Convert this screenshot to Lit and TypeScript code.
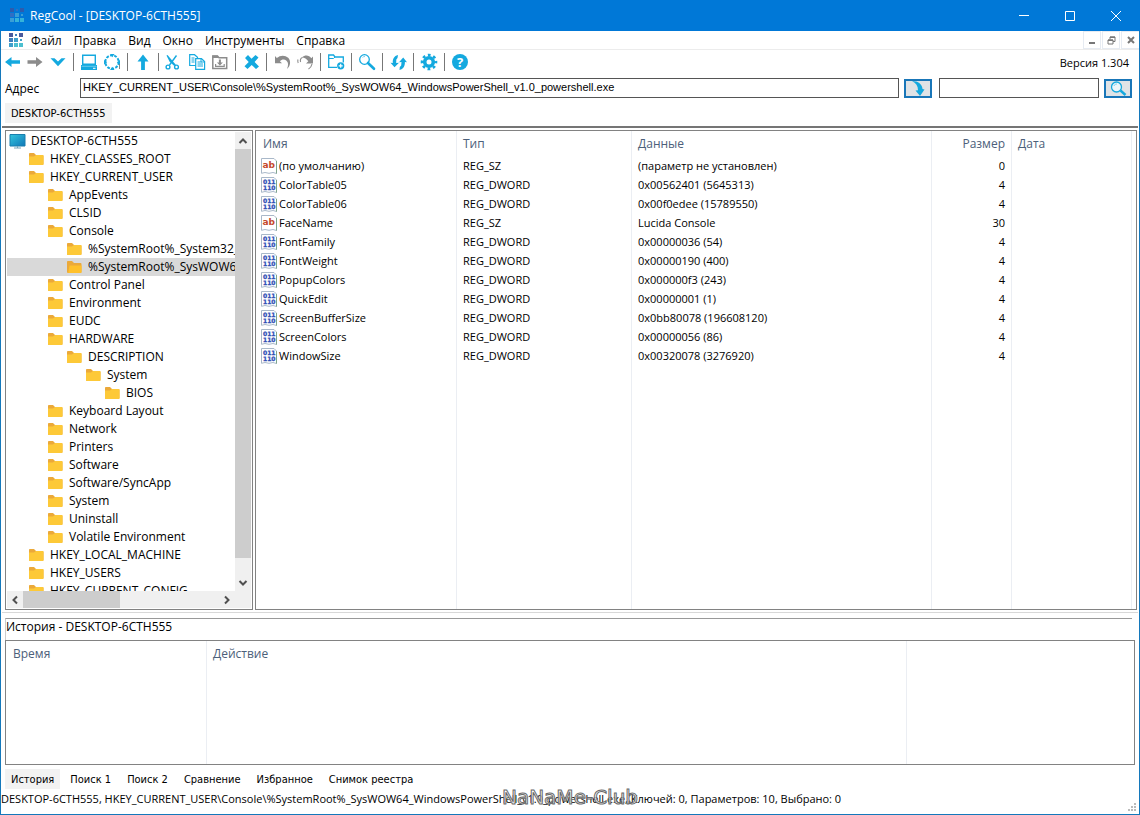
import { LitElement, html, css, svg } from "lit";
import { customElement, state } from "lit/decorators.js";
import { classMap } from "lit/directives/class-map.js";
import { styleMap } from "lit/directives/style-map.js";

interface TreeNode {
  name: string;
  level: number;
}

interface RegValue {
  name: string;
  type: string;
  data: string;
  size: number;
}

const ICONS: Record<string, unknown> = {
  back: svg`<path d="M4 12 10.500 7V10.200H19V13.800H10.500V17Z" fill="#14a9df"/>`,
  forward: svg`<path d="M18.500 12 12 7V10.200H3.500V13.800H12V17Z" fill="#8c8c8c"/>`,
  history: svg`<path d="M3.500 8.200H7.500L11 11.600 14.500 8.200H18.500L11 16.200Z" fill="#14a9df"/>`,
  computer: svg`<path d="M4.700 5.200H17.300V14.300H4.700Z" fill="#fff" stroke="#14a9df" stroke-width="1.400"/><path d="M3 15H19V20H3Z" fill="#14a9df"/><path d="M3.500 16.300H18.500" stroke="#a5e0f5" stroke-width=".6"/><path d="M15 18.300h2.500" stroke="#fff"/>`,
  focus: svg`<circle cx="11" cy="12" r="6.700" fill="none" stroke="#14a9df" stroke-width="2" stroke-dasharray="2.800 1.400"/><path d="M9 4H13.500L11.300 7.200ZM9 20H13.500L11.300 16.800ZM3 10V14.500L6.200 12.200ZM19 10V14.500L15.800 12.200Z" fill="#14a9df"/><path d="M18.500 14v5" stroke="#666" stroke-width=".8"/>`,
  up: svg`<path d="M11 4.500 16.500 11.500H12.900V20H9.100V11.500H5.500Z" fill="#14a9df"/>`,
  cut: svg`<g fill="none" stroke="#14a9df" stroke-width="1.400"><path d="M13.500 5.500 6.500 15"/><circle cx="5" cy="17" r="1.900"/><circle cx="13.500" cy="17" r="1.900"/></g><path d="M3.500 5.500 4.500 5 12.800 14.800 11.300 16 6.500 11.500Z" fill="#14a9df"/>`,
  copy: svg`<g fill="#fff" stroke="#14a9df" stroke-width="1.200"><path d="M3.700 4.700H8.500L11.500 7.200V15.500H3.700Z"/><path d="M9.700 8.700H15.500L18.600 11.500V19.300H9.700Z"/></g><path d="M5.500 8h3M5.500 10h3M5.500 12h3M11.500 12h4M11.500 14h5.500M11.500 16h5.500" stroke="#14a9df"/><path d="M15 8.700V12h3.500" fill="none" stroke="#14a9df"/>`,
  paste: svg`<path d="M3.800 6H8.500L10 7.700H17.700V18.500H3.800Z" fill="#fff" stroke="#8c8c8c" stroke-width="1.500"/><path d="M3.500 5.500H8.500L10 8H3.500Z" fill="#8c8c8c"/><path d="M9.900 9.500h2v3h2L10.900 15.400 7.900 12.500h2ZM6 14h1.200v1.800h7.400V14H15.800V17H6Z" fill="#8c8c8c"/>`,
  remove: svg`<path d="M5 8 8 5 11.500 8.700 15.500 5 18.500 7.500 14.600 11.900 19 16.500 16 19 11.700 15 7.500 19 4.500 16.300 8.700 11.900Z" fill="#14a9df"/>`,
  undo: svg`<path d="M4 6 5.800 8.100C9 5 14 4.800 17.200 7.800 20.200 11 19.500 16 16 19 17.600 15 17.400 12.500 15.500 10.800 13.500 9 10.800 9.200 8.900 11.200L11 13.200H4Z" fill="#8c8c8c"/>`,
  redo: svg`<path d="M8 7.500C11 4.600 15 5 17.300 8.200L19 6.500V13.500H12L14.300 11.200C12.800 8.800 10.500 7.800 8 7.500Z" fill="#8c8c8c"/><path d="M4 9.500C3.500 11 3.700 12 4.200 13M8.500 7.500C6.500 8 6 10 6.600 12M18 14C17.500 16.500 16.500 17.800 14.500 19" stroke="#8c8c8c" stroke-width="1.100" fill="none"/>`,
  newKey: svg`<path d="M12 17.300H3.700V5H8.500L10 7H18.300V12.500" fill="none" stroke="#14a9df" stroke-width="1.300"/><path d="M3.500 8.500H8.500L10 7" fill="none" stroke="#14a9df"/><circle cx="15.700" cy="15.800" r="3.600" fill="#14a9df"/><path d="M15.700 13.800v4M13.700 15.800h4" stroke="#fff" stroke-width="1.200"/>`,
  find: svg`<circle cx="8.500" cy="9.500" r="4.800" fill="#fff" stroke="#14a9df" stroke-width="1.300"/><path d="M6.500 7.500C7.200 6.700 8 6.500 9 6.500" fill="none" stroke="#7fd2f0"/><path d="M12 13 18 18.800" stroke="#14a9df" stroke-width="2.600" stroke-linecap="round"/>`,
  refresh: svg`<path d="M11 5 10.500 8 9.300 9.500 9.200 13 12 12.800 7.500 17.300 3.500 12.800 5.800 13C5.500 9 7 6 11 5ZM12.500 20 12.800 17 14.200 15.500 14.500 12 12 12.200 16.200 7.500 20 12.200 17.900 12C18 16 16.500 19 12.500 20Z" fill="#14a9df"/>`,
  settings: svg`<circle cx="11" cy="12" r="4.300" fill="none" stroke="#14a9df" stroke-width="3.600"/><circle cx="11" cy="12" r="7" fill="none" stroke="#14a9df" stroke-width="2.600" stroke-dasharray="2.750 2.748" stroke-dashoffset="1.370"/>`,
  help: svg`<circle cx="11" cy="12" r="8" fill="#14a9df"/><text x="11" y="16.500" text-anchor="middle" font-family="Open Sans" font-weight="700" font-size="13" fill="#fff">?</text>`,
};

const TOOL_GROUPS: [string, string][][] = [
  [["back", "Назад"], ["forward", "Вперёд"], ["history", "Журнал"]],
  [["computer", "Компьютер"], ["focus", "Выделить"]],
  [["up", "Вверх"]],
  [["cut", "Вырезать"], ["copy", "Копировать"], ["paste", "Вставить"]],
  [["remove", "Удалить"]],
  [["undo", "Отменить"], ["redo", "Повторить"]],
  [["newKey", "Создать раздел"]],
  [["find", "Найти"]],
  [["refresh", "Обновить"]],
  [["settings", "Настройки"]],
  [["help", "Справка"]],
];

const MENU = ["Файл", "Правка", "Вид", "Окно", "Инструменты", "Справка"];

const TREE: TreeNode[] = [
  { name: "DESKTOP-6CTH555", level: 0 },
  { name: "HKEY_CLASSES_ROOT", level: 1 },
  { name: "HKEY_CURRENT_USER", level: 1 },
  { name: "AppEvents", level: 2 },
  { name: "CLSID", level: 2 },
  { name: "Console", level: 2 },
  { name: "%SystemRoot%_System32_WindowsPowerShell_v1.0_powershell.exe", level: 3 },
  { name: "%SystemRoot%_SysWOW64_WindowsPowerShell_v1.0_powershell.exe", level: 3 },
  { name: "Control Panel", level: 2 },
  { name: "Environment", level: 2 },
  { name: "EUDC", level: 2 },
  { name: "HARDWARE", level: 2 },
  { name: "DESCRIPTION", level: 3 },
  { name: "System", level: 4 },
  { name: "BIOS", level: 5 },
  { name: "Keyboard Layout", level: 2 },
  { name: "Network", level: 2 },
  { name: "Printers", level: 2 },
  { name: "Software", level: 2 },
  { name: "Software/SyncApp", level: 2 },
  { name: "System", level: 2 },
  { name: "Uninstall", level: 2 },
  { name: "Volatile Environment", level: 2 },
  { name: "HKEY_LOCAL_MACHINE", level: 1 },
  { name: "HKEY_USERS", level: 1 },
  { name: "HKEY_CURRENT_CONFIG", level: 1 },
];

const VALUES: RegValue[] = [
  { name: "(по умолчанию)", type: "REG_SZ", data: "(параметр не установлен)", size: 0 },
  { name: "ColorTable05", type: "REG_DWORD", data: "0x00562401 (5645313)", size: 4 },
  { name: "ColorTable06", type: "REG_DWORD", data: "0x00f0edee (15789550)", size: 4 },
  { name: "FaceName", type: "REG_SZ", data: "Lucida Console", size: 30 },
  { name: "FontFamily", type: "REG_DWORD", data: "0x00000036 (54)", size: 4 },
  { name: "FontWeight", type: "REG_DWORD", data: "0x00000190 (400)", size: 4 },
  { name: "PopupColors", type: "REG_DWORD", data: "0x000000f3 (243)", size: 4 },
  { name: "QuickEdit", type: "REG_DWORD", data: "0x00000001 (1)", size: 4 },
  { name: "ScreenBufferSize", type: "REG_DWORD", data: "0x0bb80078 (196608120)", size: 4 },
  { name: "ScreenColors", type: "REG_DWORD", data: "0x00000056 (86)", size: 4 },
  { name: "WindowSize", type: "REG_DWORD", data: "0x00320078 (3276920)", size: 4 },
];

const BOTTOM_TABS = ["История", "Поиск 1", "Поиск 2", "Сравнение", "Избранное", "Снимок реестра"];

const KEY_PATH = "HKEY_CURRENT_USER\\Console\\%SystemRoot%_SysWOW64_WindowsPowerShell_v1.0_powershell.exe";

@customElement("app-root")
export class AppRoot extends LitElement {
  @state() private selected = 7;
  @state() private tab = 0;

  static styles = css`
    :host {
      display: block;
      font-family: "Open Sans", "Noto Sans", sans-serif;
      font-size: 12px;
      line-height: 18px;
      color: #000;
    }
    * { box-sizing: border-box; }
    button {
      font: inherit;
      color: inherit;
      background: none;
      border: 0;
      padding: 0;
      margin: 0;
    }
    svg { display: block; flex: none; }
    .window {
      display: flex;
      flex-direction: column;
      height: 100vh;
      min-height: 500px;
      background: #fff;
      border: 1px solid #1478bb;
      border-top: 0;
    }
    .titlebar {
      display: flex;
      align-items: center;
      height: 31px;
      margin: 0 -1px;
      padding-left: 9px;
      background: #0078d7;
      color: #fff;
      flex: none;
    }
    .titlebar h1 {
      flex: 1;
      margin: 0 0 0 6px;
      font-size: 12px;
      font-weight: 400;
    }
    .caption { width: 46px; height: 31px; display: grid; place-items: center; }
    .caption:last-child { width: 47px; padding-right: 2px; }
    .menubar {
      display: flex;
      align-items: center;
      height: 19px;
      padding-left: 7px;
      border-bottom: 1px solid #ececec;
      flex: none;
    }
    .menubar nav { display: flex; flex: 1; gap: 12px; padding: 2px 0 0 8px; }
    .mdi {
      width: 18px;
      height: 18px;
      display: grid;
      place-items: center;
      border: 1px solid #e6ebf2;
      margin-left: 1px;
    }
    .mdi:last-child { border-right: 0; }
    .toolbar { display: flex; align-items: center; height: 24px; flex: none; }
    .group { display: flex; }
    .group + .group::before {
      content: "";
      width: 1px;
      height: 18px;
      margin: 3px 4px 0 3px;
      background: #777;
    }
    .version { margin-left: auto; padding: 2px 10px 0 0; font-size: 11px; }
    .address {
      display: grid;
      grid-template-columns: 70px 1fr 28px 162px 28px;
      gap: 5px;
      align-items: center;
      height: 28px;
      padding: 0 7px 0 4px;
      flex: none;
    }
    .address label { padding-top: 2px; }
    .address input {
      height: 20px;
      border: 1px solid #555;
      padding: 0 1px 2px 2px;
      min-width: 0;
      width: 100%;
      font: 11px/16px "Liberation Sans", Arial, sans-serif;
      color: #000;
      background: #fff;
      border-radius: 0;
      outline: none;
    }
    .address .query { width: 160px; justify-self: end; }
    .go {
      height: 19px;
      border: 2px solid #1976b8;
      background: #dfe3e6;
      display: grid;
      place-items: center;
      overflow: hidden;
    }
    .small { font-family: "DejaVu Sans Condensed", "DejaVu Sans", sans-serif; font-size: 11px; line-height: 18px; }
    .doctabs { display: flex; padding: 1px 4px 3px; flex: none; }
    .tab { padding: 2px 6px 0; height: 20px; }
    .tab.on { background: #f2f2f2; }
    .panes {
      flex: 1;
      min-height: 0;
      display: grid;
      grid-template-columns: 248px 1fr;
      gap: 2px;
      margin: 0 1px;
      padding: 2px 1px 2px 3px;
      border-top: 2px solid #757575;
      border-bottom: 1px solid #d8d8d8;
    }
    .box { border: 1px solid #828282; min-width: 0; min-height: 0; overflow: hidden; }
    .treebox { display: grid; grid-template: 1fr 17px / 1fr 16px; padding: 1px; }
    .tree { list-style: none; margin: 0; padding: 0; overflow: hidden; min-height: 0; }
    .node {
      display: flex;
      align-items: center;
      gap: 5px;
      height: 18px;
      white-space: nowrap;
      cursor: default;
    }
    .node.on { background: #d9d9d9; }
    .vscroll, .hscroll { display: flex; background: #f0f0f0; }
    .vscroll { flex-direction: column; }
    .arrow { width: 16px; height: 17px; display: grid; place-items: center; flex: none; }
    .track { flex: 1; display: flex; }
    .vscroll .track { flex-direction: column; }
    .thumb { background: #cdcdcd; }
    .corner { background: #f0f0f0; }
    table { width: 100%; height: 100%; border-collapse: separate; border-spacing: 0; table-layout: fixed; }
    th, td {
      font-size: 11px;
      font-weight: 400;
      text-align: left;
      padding: 0 6px;
      border-right: 1px solid #ebeef3;
      white-space: nowrap;
      overflow: hidden;
      height: 19px;
      line-height: 18px;
    }
    th { height: 25px; font-size: 12px; color: #4c607a; }
    th:first-child { padding-left: 7px; }
    th:last-child, td:last-child { border-right: 0; }
    .num { text-align: right; }
    .cell { display: flex; align-items: center; gap: 2px; }
    td:first-child { padding-left: 5px; }
    tr.rest td { height: auto; }
    .history { padding: 5px 4px 4px; flex: none; }
    .history h2 {
      margin: 0 3px 0 0;
      height: 22px;
      border-top: 1px solid #999;
      border-left: 1px solid #ccc;
      font-size: 12px;
      font-weight: 400;
      line-height: 16px;
    }
    .history .box { height: 125px; }
    .bottomtabs { display: flex; gap: 4px; padding: 0 4px; flex: none; }
    .status {
      position: relative;
      display: flex;
      justify-content: space-between;
      height: 25px;
      font-size: 11px;
      line-height: 20px;
      white-space: nowrap;
      flex: none;
    }
    .grip { align-self: flex-end; margin: 0 2px 2px 0; }
    .mark {
      position: absolute;
      left: 0;
      right: 0;
      top: -3px;
      text-align: center;
      font: 20px/22px "DejaVu Sans", sans-serif;
      color: rgba(255, 255, 255, 0.8);
      -webkit-text-stroke: 1px #6a6a6a;
      pointer-events: none;
    }
  `;

  private logo(onBlue: boolean) {
    const c = onBlue
      ? ["#2c5cae", "#2f6fc4", "#3a9ed6", "#35b3d9"]
      : ["#4a5a9c", "#3f7fbd", "#3f9fcb", "#4cc0d0"];
    return svg`<svg width="15" height="15" viewBox="0 0 15 15" aria-hidden="true">
      <path d="M1 0h4v4H1ZM11 0h4v4h-4Z" fill=${c[0]}/>
      <path d="M7 1h2v2H7ZM1 5h4v4H1Z" fill=${c[1]}/>
      <path d="M6 5h4v4H6ZM12 6h2v2h-2ZM1 10h4v4H1Z" fill=${c[2]}/>
      <path d="M6 10h4v4H6ZM11 10h4v4h-4Z" fill=${c[3]}/>
    </svg>`;
  }

  private folder(open: boolean) {
    return svg`<svg width="16" height="16" viewBox="0 0 16 16" aria-hidden="true">
      <path d="M0 2.500Q0 2 1 2H5L7 4H13.500Q14.500 4 14.500 5V13Q14.500 14 13.500 14H1Q0 14 0 13Z" fill="#eba93a"/>
      ${open
        ? svg`<path d="M2.500 6.500H14.500V13Q14.500 14 13.500 14H1.200Z" fill="#ffc02a"/>`
        : svg`<path d="M0 5.500H5L7 4H13.500Q14.500 4 14.500 5V13Q14.500 14 13.500 14H1Q0 14 0 13Z" fill="#fdc938"/>`}
    </svg>`;
  }

  private computer() {
    return svg`<svg width="17" height="16" viewBox="0 0 17 16" aria-hidden="true">
      <defs><linearGradient id="screen" x1="0" y1="0" x2="1" y2="1"><stop offset="0" stop-color="#35c6dd"/><stop offset="1" stop-color="#0f77b8"/></linearGradient></defs>
      <path d="M1 1.500H16V13H1Z" fill="url(#screen)" stroke="#1a7fae"/>
      <path d="M8 13h1v1.500h3v1H5v-1h3Z" fill="#7aa5ba"/>
    </svg>`;
  }

  private valueIcon(text: boolean) {
    return svg`<svg width="16" height="16" viewBox="0 0 16 16" aria-hidden="true">
      <path d="M.5.500H13L15.500 3V15.500L12 14.500 8 15.300 4 14.500.5 15.300Z" fill="#fff" stroke="#a9b8c9"/>
      <path d="M15.500 3V15.500" stroke="#7fa58c"/>
      ${text
        ? svg`<text x="1.500" y="10" font-family="DejaVu Sans" font-weight="700" font-size="9" fill="#c4492c">ab</text>`
        : svg`<g font-family="DejaVu Sans" font-weight="700" font-size="6" fill="#2f4fb5" stroke="#2f4fb5" stroke-width=".3"><text x="2" y="7">011</text><text x="2" y="13">110</text></g>`}
    </svg>`;
  }

  private arrow(d: string, label: string) {
    return html`<button class="arrow" aria-label=${label}>
      <svg width="10" height="10" viewBox="0 0 10 10"><path d=${d} fill="none" stroke="#505050" stroke-width="2"/></svg>
    </button>`;
  }

  render() {
    return html`
      <div class="window">
        <header class="titlebar">
          ${this.logo(true)}
          <h1>RegCool - [DESKTOP-6CTH555]</h1>
          <button class="caption" aria-label="Свернуть"><svg width="10" height="10"><path d="M0 4.500H10" stroke="#fff"/></svg></button>
          <button class="caption" aria-label="Развернуть"><svg width="10" height="10"><path d="M.5.500H9.500V9.500H.5Z" fill="none" stroke="#fff"/></svg></button>
          <button class="caption" aria-label="Закрыть"><svg width="10" height="10"><path d="M0 0 10 10M10 0 0 10" stroke="#fff"/></svg></button>
        </header>

        <div class="menubar">
          ${this.logo(false)}
          <nav>${MENU.map((m) => html`<button>${m}</button>`)}</nav>
          <button class="mdi" aria-label="Свернуть окно"><svg width="8" height="8"><path d="M1 7H7" stroke="#777" stroke-width="2"/></svg></button>
          <button class="mdi" aria-label="Восстановить окно"><svg width="9" height="9"><path d="M1 4H6V8H1ZM3 3.500V1H8V5.500H6" fill="none" stroke="#777"/><path d="M3 1.200H8M1 4.200H6" stroke="#777" stroke-width="1.500"/></svg></button>
          <button class="mdi" aria-label="Закрыть окно"><svg width="8" height="8"><path d="M1 1 7 7M7 1 1 7" stroke="#777" stroke-width="2"/></svg></button>
        </div>

        <div class="toolbar">
          ${TOOL_GROUPS.map(
            (g) => html`<div class="group">${g.map(
              ([id, label]) => html`<button aria-label=${label}><svg width="23" height="24" viewBox="0 0 23 24">${ICONS[id]}</svg></button>`
            )}</div>`
          )}
          <span class="version">Версия 1.304</span>
        </div>

        <div class="address">
          <label for="path">Адрес</label>
          <input id="path" type="text" .value=${KEY_PATH} />
          <button class="go" aria-label="Перейти">
            <svg width="16" height="15" viewBox="0 0 16 15"><path d="M2 0C8.500 0 12 3.500 12.500 8L14.500 8.500 10 15 5.500 9.500 8 9.300C8 5 6 2 2 0Z" fill="#14a9df"/></svg>
          </button>
          <input class="query" type="text" aria-label="Поиск" />
          <button class="go" aria-label="Искать">
            <svg width="17" height="15" viewBox="0 0 17 15"><circle cx="6.500" cy="6" r="5" fill="#eef6fa" stroke="#14a9df" stroke-width="1.300"/><path d="M4 5C4.300 3.500 5.500 3 7 3" fill="none" stroke="#7fd2f0"/><path d="M10.500 9.500 15.500 14" stroke="#14a9df" stroke-width="2.400"/></svg>
          </button>
        </div>

        <div class="doctabs small"><button class="tab on">DESKTOP-6CTH555</button></div>

        <main class="panes">
          <section class="box treebox">
            <ul class="tree" role="tree" aria-label="Разделы реестра">
              ${TREE.map(
                (n, i) => html`<li
                  role="treeitem"
                  aria-level=${n.level + 1}
                  aria-selected=${i === this.selected}
                  class=${classMap({ node: true, on: i === this.selected })}
                  style=${styleMap({ paddingLeft: `${n.level ? n.level * 19 + 3 : 2}px` })}
                  @click=${() => (this.selected = i)}
                >${n.level ? this.folder(i === this.selected) : this.computer()}<span>${n.name}</span></li>`
              )}
            </ul>
            <div class="vscroll">
              ${this.arrow("M1.500 7 5 3.500 8.500 7", "Вверх")}
              <div class="track"><div class="thumb" style=${styleMap({ height: "96.2%" })}></div></div>
              ${this.arrow("M1.500 3 5 6.500 8.500 3", "Вниз")}
            </div>
            <div class="hscroll">
              ${this.arrow("M7 1.500 3.500 5 7 8.500", "Влево")}
              <div class="track"><div class="thumb" style=${styleMap({ width: "49.5%" })}></div></div>
              ${this.arrow("M3 1.500 6.500 5 3 8.500", "Вправо")}
            </div>
            <div class="corner"></div>
          </section>

          <section class="box">
            <table>
              <colgroup><col style="width:201px" /><col style="width:175px" /><col style="width:300px" /><col style="width:80px" /><col style="width:120px" /><col /></colgroup>
              <thead><tr><th>Имя</th><th>Тип</th><th>Данные</th><th class="num">Размер</th><th>Дата</th><th></th></tr></thead>
              <tbody>
                ${VALUES.map(
                  (v) => html`<tr>
                    <td><div class="cell">${this.valueIcon(v.type === "REG_SZ")}<span>${v.name}</span></div></td>
                    <td>${v.type}</td><td>${v.data}</td><td class="num">${v.size}</td><td></td><td></td>
                  </tr>`
                )}
                <tr class="rest"><td></td><td></td><td></td><td></td><td></td><td></td></tr>
              </tbody>
            </table>
          </section>
        </main>

        <section class="history">
          <h2>История - DESKTOP-6CTH555</h2>
          <div class="box">
            <table>
              <colgroup><col style="width:201px" /><col style="width:700px" /><col /></colgroup>
              <thead><tr><th>Время</th><th>Действие</th><th></th></tr></thead>
              <tbody><tr class="rest"><td></td><td></td><td></td></tr></tbody>
            </table>
          </div>
        </section>

        <div class="bottomtabs small" role="tablist">
          ${BOTTOM_TABS.map(
            (t, i) => html`<button role="tab" aria-selected=${i === this.tab} class=${classMap({ tab: true, on: i === this.tab })} @click=${() => (this.tab = i)}>${t}</button>`
          )}
        </div>

        <footer class="status">
          <span>DESKTOP-6CTH555, ${KEY_PATH}, Ключей: 0, Параметров: 10, Выбрано: 0</span>
          <span class="mark">NaNaMe-Club</span>
          <svg class="grip" width="9" height="9" aria-hidden="true"><path d="M6 0h2v2H6ZM3 3h2v2H3ZM6 3h2v2H6ZM0 6h2v2H0ZM3 6h2v2H3ZM6 6h2v2H6Z" fill="#bbb"/></svg>
        </footer>
      </div>
    `;
  }
}
